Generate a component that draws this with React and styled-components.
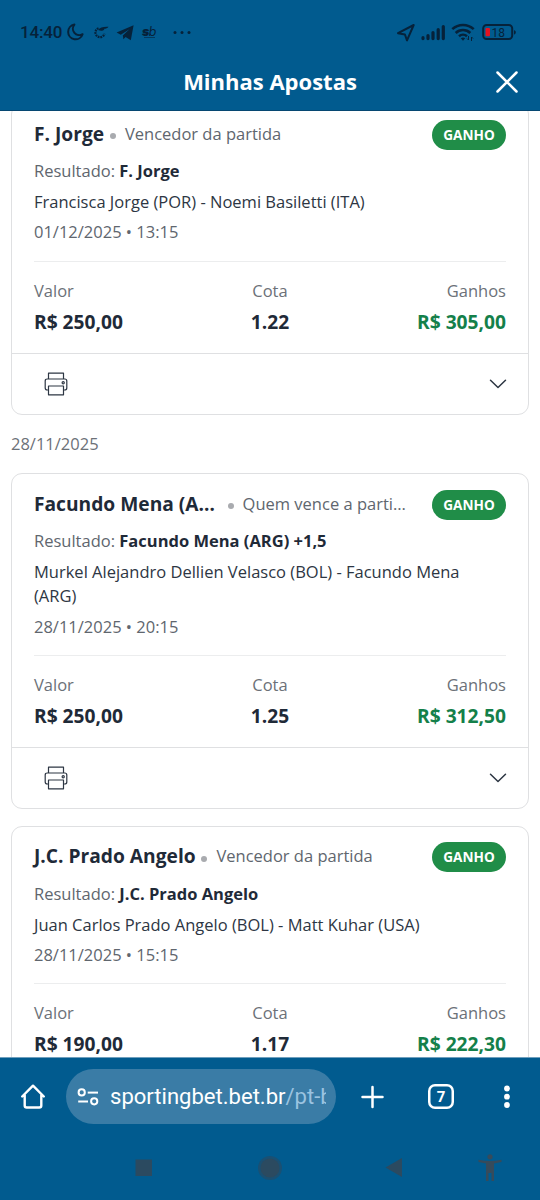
import React from 'react';
import styled, { createGlobalStyle } from 'styled-components';

const GlobalStyle = createGlobalStyle`
  * {
    box-sizing: border-box;
  }

  body {
    margin: 0;
    background: #fff;
    font-family: 'Open Sans', 'Noto Sans', sans-serif;
  }

  p, h1, h2 {
    margin: 0;
  }

  svg {
    display: block;
    flex: none;
  }
`;

const Screen = styled.div`
  display: flex;
  flex-direction: column;
  width: 540px;
  height: 1200px;
  overflow: hidden;
`;

const StatusBar = styled.div`
  display: flex;
  justify-content: space-between;
  flex: none;
  height: 54px;
  padding: 10px 23px 0 20px;
  background: #015b8f;
  color: #06223a;
`;

const StatusGroup = styled.div`
  display: flex;
  align-items: center;
  height: 44px;
`;

const Clock = styled.span`
  width: 46px;
  font-family: Roboto, sans-serif;
  font-size: 17px;
  font-weight: 500;
  letter-spacing: -0.2px;
  white-space: nowrap;
`;

const Header = styled.header`
  display: grid;
  grid-template-columns: 1fr auto 1fr;
  align-items: center;
  flex: none;
  height: 57px;
  padding: 0 21px 1px;
  background: #015b8f;
  border-bottom: 1px solid #064772;
  color: #fff;
`;

const HeaderTitle = styled.h1`
  grid-column: 2;
  margin-bottom: 2px;
  font-size: 22px;
  font-weight: 700;
  line-height: 30px;
`;

const CloseButton = styled.button`
  justify-self: end;
  padding: 0;
  border: 0;
  background: none;
  color: inherit;
`;

const BetList = styled.main`
  flex: 1;
  min-height: 0;
  padding: 0 11px;
  overflow: hidden;
`;

const ScrolledContent = styled.div`
  margin-top: -8px;
`;

const DateLabel = styled.p`
  height: 58.5px;
  padding-top: 17px;
  color: #6c7178;
  font-size: 16.5px;
  line-height: 24px;
`;

const Card = styled.article`
  margin-bottom: ${({ $gap }) => $gap || 0}px;
  border: 1px solid #dfe0e2;
  border-radius: 11px;
  background: #fff;
`;

const CardBody = styled.div`
  padding: 0 22px;
`;

const TitleRow = styled.div`
  display: flex;
  align-items: center;
  height: 47px;
  padding-top: 14px;
`;

const Pick = styled.h2`
  margin-bottom: 2px;
  color: #1f2a38;
  font-size: 19.2px;
  font-weight: 700;
  line-height: 28px;
  white-space: nowrap;
`;

const Dot = styled.span`
  flex: none;
  width: 6px;
  height: 6px;
  margin: 3px 9px 0 ${({ $wide }) => ($wide ? 12.6 : 5.8)}px;
  border-radius: 50%;
  background: #a9abaf;
`;

const Market = styled.span`
  margin-bottom: 2px;
  color: #60666e;
  font-size: 16.5px;
  line-height: 24px;
  white-space: nowrap;
`;

const Badge = styled.span`
  flex: none;
  width: 74px;
  height: 30px;
  margin-left: auto;
  border-radius: 15px;
  background: #208d48;
  color: #fff;
  font-size: 13.6px;
  font-weight: 700;
  line-height: 30px;
  text-align: center;
`;

const Line = styled.p`
  margin-top: ${({ $top }) => $top || 6}px;
  color: ${({ $dark }) => ($dark ? '#2d3643' : '#60666e')};
  font-size: 16.5px;
  line-height: 24.4px;

  strong {
    color: #1f2a38;
    font-weight: 700;
  }
`;

const Totals = styled.div`
  display: grid;
  grid-template-columns: 1fr 1fr 1fr;
  height: 92px;
  margin-top: 16px;
  padding-top: 16px;
  border-top: 1px solid #ecedee;
`;

const Total = styled.div`
  text-align: ${({ $align }) => $align};
`;

const TotalLabel = styled.p`
  color: #6c7178;
  font-size: 16.5px;
  line-height: 25px;
`;

const TotalValue = styled.p`
  margin-top: 4px;
  color: ${({ $won }) => ($won ? '#14804a' : '#1f2a38')};
  font-size: 19.2px;
  font-weight: 700;
  line-height: 30px;
`;

const CardFooter = styled.footer`
  display: flex;
  align-items: center;
  justify-content: space-between;
  height: 61px;
  padding: 0 21px 0 32px;
  border-top: 1px solid #dfe0e2;
  color: #2d3643;
`;

const BrowserBar = styled.div`
  display: flex;
  align-items: center;
  flex: none;
  height: 79px;
  padding: 0 20px 1px 21px;
  background: #015b8f;
  border-top: 1px solid #6f9fbd;
  color: #fff;
`;

const AddressPill = styled.div`
  display: flex;
  align-items: center;
  width: 270px;
  height: 55px;
  margin: 0 24px 0 21px;
  padding: 0 10px 0 11px;
  border-radius: 28px;
  background: #3a7ca6;
`;

const Address = styled.span`
  flex: 1;
  margin-left: 11px;
  overflow: hidden;
  font-family: Roboto, sans-serif;
  font-size: 22.05px;
  line-height: 30px;
  white-space: nowrap;

  span {
    color: #9bc3e0;
  }
`;

const TabCount = styled.span`
  display: flex;
  align-items: center;
  justify-content: center;
  flex: none;
  width: 26px;
  height: 25px;
  margin: 0 40px 0 44px;
  border-radius: 7px;
  box-shadow: inset 0 0 0 2.5px #fff;
  font-family: Roboto, sans-serif;
  font-size: 15px;
  font-weight: 700;
  line-height: 20px;
`;

const SystemNav = styled.nav`
  display: flex;
  align-items: center;
  flex: none;
  height: 64px;
  padding-left: 135px;
  background: #015b8f;
  color: #2b4a60;
`;

const bets = [
  {
    pick: 'F. Jorge',
    market: 'Vencedor da partida',
    result: 'F. Jorge',
    match: 'Francisca Jorge (POR) - Noemi Basiletti (ITA)',
    date: '01/12/2025 • 13:15',
    stake: 'R$ 250,00',
    odds: '1.22',
    payout: 'R$ 305,00',
  },
  {
    pick: 'Facundo Mena (A…',
    market: 'Quem vence a parti…',
    truncated: true,
    result: 'Facundo Mena (ARG) +1,5',
    match: 'Murkel Alejandro Dellien Velasco (BOL) - Facundo Mena (ARG)',
    date: '28/11/2025 • 20:15',
    stake: 'R$ 250,00',
    odds: '1.25',
    payout: 'R$ 312,50',
  },
  {
    pick: 'J.C. Prado Angelo',
    market: 'Vencedor da partida',
    result: 'J.C. Prado Angelo',
    match: 'Juan Carlos Prado Angelo (BOL) - Matt Kuhar (USA)',
    date: '28/11/2025 • 15:15',
    stake: 'R$ 190,00',
    odds: '1.17',
    payout: 'R$ 222,30',
  },
];

const StatusIcons = () => (
  <svg width="130" height="24" viewBox="66 20 130 24" fill="currentColor">
    <path
      d="M74.400 24.600a7.400 7.400 0 1 0 8.200 9.600 6.400 6.400 0 0 1-8.200-9.600z"
      fill="none"
      stroke="currentColor"
      strokeWidth="2"
      strokeLinejoin="round"
    />
    <path
      d="M98.500 28.200a4.600 4.600 0 1 0 6 5.500"
      fill="none"
      stroke="currentColor"
      strokeWidth="2.200"
      strokeDasharray="1.800 .8"
    />
    <path d="M98 30c2-2.600 5-3.400 10.500-3.200-1 1.400-2.600 2-4.200 2 .2.900-.8 1.800-2.400 1.900-1 .1-2.200 0-3.900-.7z" />
    <path d="M116.600 32.600 133.600 25.300 130.800 40.300 125.600 37 123.400 39.300 122.800 35.600 129.400 29.300 120.800 34.800z" />
    <text
      x="142"
      y="35.500"
      fontFamily="Inter, sans-serif"
      fontSize="12.500"
      fontStyle="italic"
      fontWeight="900"
      letterSpacing="-.5"
    >
      s<tspan fontWeight="400">b</tspan>
    </text>
    <path d="M144 37h11v1h-11z" opacity=".6" />
    <circle cx="175" cy="32.500" r="1.500" />
    <circle cx="182" cy="32.500" r="1.500" />
    <circle cx="189" cy="32.500" r="1.500" />
  </svg>
);

const ConnectionIcons = () => (
  <svg width="122" height="24" viewBox="395 20 122 24" fill="currentColor">
    <path
      d="M398 33.200 413.700 25 407 40.400 404.900 34.500z"
      fill="none"
      stroke="currentColor"
      strokeWidth="2"
      strokeLinejoin="round"
    />
    <g stroke="currentColor" strokeWidth="3.200" strokeLinecap="round">
      <path d="M423 37.700v.9M428 35.500v3.100M433 32.500v6.100M438.200 29.500v9.100M443.300 26.500v12.100" />
    </g>
    <g fill="none" stroke="currentColor" strokeWidth="2.500">
      <path d="M452.300 29.200a15.500 15.500 0 0 1 21.400 0" />
      <path d="M455.700 33a10.600 10.600 0 0 1 14.600 0" />
      <path d="M459 36.300a6 6 0 0 1 8 0" />
    </g>
    <path d="M460.800 38.200q2.200-1.500 4.400 0L463 40.700z" />
    <path d="M468.500 36v4l-1.500-1.500M471.500 41v-4l1.500 1.500" fill="none" stroke="currentColor" />
    <rect
      x="483.200"
      y="25"
      width="29"
      height="14"
      rx="3.500"
      fill="none"
      stroke="currentColor"
      strokeWidth="2"
    />
    <rect x="485.500" y="28" width="4.500" height="8.300" rx="1" fill="#e5121f" />
    <path d="M514 30.200c2.400.2 2.400 4 0 4.200z" />
    <text x="491.500" y="36.500" fontFamily="Roboto, sans-serif" fontSize="12">
      18
    </text>
  </svg>
);

const CloseIcon = () => (
  <svg width="24" height="24" viewBox="0 0 24 24">
    <path
      d="M2.500 2.500l19 19M21.500 2.500l-19 19"
      stroke="currentColor"
      strokeWidth="2.500"
      strokeLinecap="round"
    />
  </svg>
);

const PrinterIcon = () => (
  <svg
    width="24"
    height="24"
    viewBox="0 0 24 24"
    fill="none"
    stroke="currentColor"
    strokeWidth="1.200"
    strokeLinejoin="round"
  >
    <path d="M4.500 7V1.200h15V7" />
    <path d="M4.500 18H3.300Q1.200 18 1.200 16V9Q1.200 7 3.200 7H20.800Q22.800 7 22.800 9V16Q22.800 18 20.700 18H19.500" />
    <path d="M4.500 14h15v8.800h-15z" />
    <circle cx="19.200" cy="10.800" r="1.100" />
  </svg>
);

const ChevronIcon = () => (
  <svg width="18" height="10" viewBox="0 0 18 10">
    <path
      d="M1.500 1.200 9 8.500l7.500-7.300"
      fill="none"
      stroke="currentColor"
      strokeWidth="1.500"
      strokeLinecap="round"
      strokeLinejoin="round"
    />
  </svg>
);

const HomeIcon = () => (
  <svg width="24" height="25" viewBox="0 0 24 25">
    <path
      d="M1.200 12.500 12 1.700 22.800 12.500M3.700 11v10.500q0 2 2 2h12.600q2 0 2-2V11"
      fill="none"
      stroke="currentColor"
      strokeWidth="2.400"
      strokeLinecap="round"
      strokeLinejoin="round"
    />
  </svg>
);

const SiteSettingsIcon = () => (
  <svg width="22" height="18" viewBox="0 0 22 18">
    <g fill="none" stroke="currentColor" strokeWidth="2">
      <circle cx="4.700" cy="4.400" r="3.100" />
      <path d="M10.700 4.600H21" />
      <path d="M1.200 13.500H11" />
      <circle cx="17.200" cy="13.300" r="3.100" />
    </g>
  </svg>
);

const PlusIcon = () => (
  <svg width="24" height="24" viewBox="0 0 24 24">
    <path
      d="M12.500 2v20M2.500 12h20"
      stroke="currentColor"
      strokeWidth="2.500"
      strokeLinecap="round"
    />
  </svg>
);

const MoreIcon = () => (
  <svg width="26" height="26" viewBox="0 0 26 26" fill="currentColor">
    <circle cx="13" cy="4.500" r="2.900" />
    <circle cx="13" cy="12.700" r="2.900" />
    <circle cx="13" cy="21" r="2.900" />
  </svg>
);

const NavIcons = () => (
  <svg width="368" height="30" viewBox="135 1153 368 30" fill="currentColor">
    <rect x="135.500" y="1159.500" width="16.500" height="16.500" />
    <circle cx="270" cy="1168" r="12" fill="#1a5073" />
    <circle cx="270" cy="1168" r="9.500" />
    <path d="M385.500 1167.500 402 1158v19z" />
    <g fill="#364b5b">
      <circle cx="490" cy="1156.800" r="2.600" />
      <path d="M478.500 1159.800q11.500 2.500 23 0v2.300l-7.500 1.400V1181h-2.500v-8h-3v8H486v-17.500l-7.500-1.400z" />
    </g>
  </svg>
);

const BetCard = ({ bet, gap }) => (
  <Card $gap={gap}>
    <CardBody>
      <TitleRow>
        <Pick>{bet.pick}</Pick>
        <Dot $wide={bet.truncated} />
        <Market>{bet.market}</Market>
        <Badge>GANHO</Badge>
      </TitleRow>
      <Line $top={8.3}>
        Resultado: <strong>{bet.result}</strong>
      </Line>
      <Line $dark>{bet.match}</Line>
      <Line>{bet.date}</Line>
      <Totals>
        <Total $align="left">
          <TotalLabel>Valor</TotalLabel>
          <TotalValue>{bet.stake}</TotalValue>
        </Total>
        <Total $align="center">
          <TotalLabel>Cota</TotalLabel>
          <TotalValue>{bet.odds}</TotalValue>
        </Total>
        <Total $align="right">
          <TotalLabel>Ganhos</TotalLabel>
          <TotalValue $won>{bet.payout}</TotalValue>
        </Total>
      </Totals>
    </CardBody>
    <CardFooter>
      <PrinterIcon />
      <ChevronIcon />
    </CardFooter>
  </Card>
);

const App = () => (
  <Screen>
    <GlobalStyle />
    <StatusBar>
      <StatusGroup>
        <Clock>14:40</Clock>
        <StatusIcons />
      </StatusGroup>
      <StatusGroup>
        <ConnectionIcons />
      </StatusGroup>
    </StatusBar>
    <Header>
      <HeaderTitle>Minhas Apostas</HeaderTitle>
      <CloseButton aria-label="Fechar">
        <CloseIcon />
      </CloseButton>
    </Header>
    <BetList>
      <ScrolledContent>
        <BetCard bet={bets[0]} />
        <DateLabel>28/11/2025</DateLabel>
        <BetCard bet={bets[1]} gap={17} />
        <BetCard bet={bets[2]} />
      </ScrolledContent>
    </BetList>
    <BrowserBar>
      <HomeIcon />
      <AddressPill>
        <SiteSettingsIcon />
        <Address>
          sportingbet.bet.br<span>/pt-br</span>
        </Address>
      </AddressPill>
      <PlusIcon />
      <TabCount>7</TabCount>
      <MoreIcon />
    </BrowserBar>
    <SystemNav>
      <NavIcons />
    </SystemNav>
  </Screen>
);

export default App;
